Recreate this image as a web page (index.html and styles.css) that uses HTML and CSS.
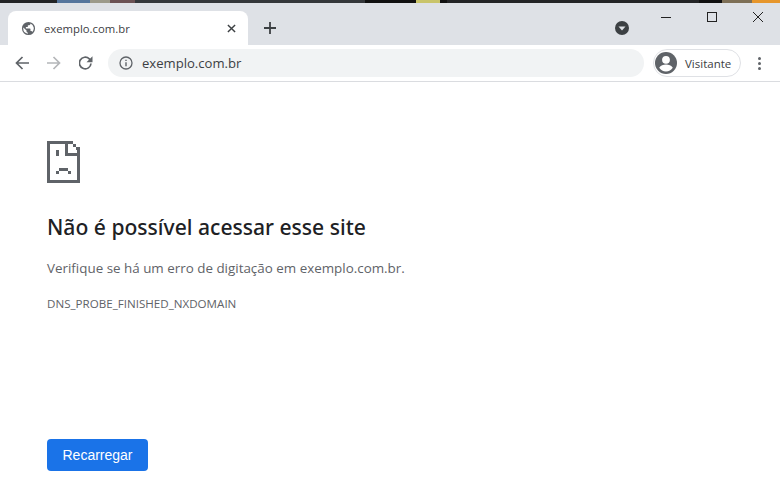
FILE: index.html
```html
<!DOCTYPE html>
<html lang="pt-BR">
<head>
    <meta charset="UTF-8">
    <title>exemplo.com.br</title>
    <link rel="stylesheet" href="styles.css">
</head>
<body>
    <!-- Desktop wallpaper strip above the window -->
    <div class="desktop">
        <span class="wall wall-blue"></span>
        <span class="wall wall-beige"></span>
        <span class="wall wall-brown"></span>
        <span class="wall wall-grey"></span>
        <span class="wall wall-black"></span>
        <span class="wall wall-yellow"></span>
        <span class="wall wall-black-short"></span>
        <span class="wall wall-grey-long"></span>
        <span class="wall wall-black-mid"></span>
        <span class="wall wall-olive"></span>
        <span class="wall wall-orange"></span>
    </div>

    <!-- Tab strip -->
    <div class="tabstrip">
        <div class="tab">
            <svg class="favicon" viewBox="0 0 16 16"><path fill="#5f6368" d="M8 1a7 7 0 1 0 0 14A7 7 0 0 0 8 1zM7.300 13.500A5.600 5.600 0 0 1 2.400 8c0-.4 0-.8.1-1.200L5.900 10.200v.7c0 .8.600 1.400 1.400 1.400v1.200zm4.800-1.800c-.2-.6-.7-1-1.300-1h-.7V8.600c0-.4-.3-.7-.7-.7H5.200V6.500h1.400c.4 0 .7-.3.7-.7V4.400h1.400c.8 0 1.400-.6 1.400-1.400v-.3a5.600 5.600 0 0 1 2 9z"/></svg>
            <span class="tab-title">exemplo.com.br</span>
            <svg class="tab-close" viewBox="0 0 10 10"><path d="M1 1l8 8M9 1l-8 8"/></svg>
        </div>
        <svg class="new-tab" viewBox="0 0 12 12"><path d="M6 0v12M0 6h12"/></svg>
        <div class="strip-space"></div>
        <svg class="tab-search" viewBox="0 0 14 14"><circle cx="7" cy="7" r="7" fill="#3c4043"/><path fill="#dee1e6" d="M3.500 5.500h7L7 9.500z"/></svg>
        <div class="window-controls">
            <svg viewBox="0 0 46 30"><path d="M19 15.500h10"/></svg>
            <svg viewBox="0 0 46 30"><rect x="19.500" y="10.500" width="9" height="9"/></svg>
            <svg viewBox="0 0 46 30"><path d="M19 10l10 10M29 10l-10 10"/></svg>
        </div>
    </div>

    <!-- Address bar row -->
    <div class="toolbar">
        <svg class="nav-icon" viewBox="0 0 14 14"><path class="nav-dark" d="M14 7H1.500M7.500 1L1.500 7l6 6"/></svg>
        <svg class="nav-icon" viewBox="0 0 14 14"><path class="nav-light" d="M0 7h12.500M6.500 1l6 6-6 6"/></svg>
        <svg class="nav-icon" viewBox="1.500 1 14 14"><path class="nav-dark" d="M13.500 8.500a5.800 5.800 0 1 1-1.700-4.600L14 6.200"/><path fill="#5f6368" d="M15 1.200v6h-6z"/></svg>
        <div class="omnibox">
            <svg class="info-icon" viewBox="0 0 14 14"><circle cx="7" cy="7" r="6" fill="none" stroke="#5f6368" stroke-width="1.300"/><path fill="#5f6368" d="M6.300 6.200h1.400v4.100H6.300zM6.300 3.700h1.400v1.400H6.300z"/></svg>
            <span class="url">exemplo.com.br</span>
        </div>
        <div class="profile">
            <svg class="avatar" viewBox="0 0 22 22"><circle cx="11" cy="11" r="11" fill="#5f6368"/><circle cx="11" cy="7.800" r="3.900" fill="#fff"/><path fill="#fff" d="M4.200 15.800c1.300-2.300 4.200-3.300 6.800-3.300s5.500 1 6.800 3.300c-1.500 2.200-4 3.700-6.800 3.700s-5.300-1.500-6.800-3.700z"/></svg>
            <span class="profile-name">Visitante</span>
        </div>
        <div class="menu-dots"><i></i><i></i><i></i></div>
    </div>

    <!-- Error page -->
    <main class="error-page">
        <svg class="sad-file" viewBox="0 0 33 42" shape-rendering="crispEdges">
            <path fill="#5f6368" d="M0 0h26v3H3v36h27V15H18V3h3v9h12v30H0zM26 3h3v3h-3zM29 6h4v3h-4zM30 9h3v3h-3z"/>
            <path fill="#5f6368" d="M9 9h3v6H9zM9 30h3v3H9zM12 27h9v3h-9zM21 30h3v3h-3z"/>
        </svg>
        <h1>Não é possível acessar esse site</h1>
        <p class="message">Verifique se há um erro de digitação em exemplo.com.br.</p>
        <p class="error-code">DNS_PROBE_FINISHED_NXDOMAIN</p>
        <button class="reload">Recarregar</button>
    </main>
</body>
</html>
```

FILE: styles.css
```css
* {
    box-sizing: border-box;
}
html, body {
    margin: 0;
    height: 100%;
}
body {
    width: 780px;
    height: 493px;
    overflow: hidden;
    display: flex;
    flex-direction: column;
    background-color: #fff;
    font-family: "Open Sans", "Noto Sans", sans-serif;
}
svg {
    display: block;
    flex: none;
}

/* wallpaper */
.desktop {
    height: 3px;
    display: flex;
    background-color: #232426;
}
.wall {
    height: 100%;
}
.wall-blue {
    width: 33px;
    margin-left: 57px;
    background-color: #55759c;
}
.wall-beige {
    width: 20px;
    background-color: #9c9a8a;
}
.wall-brown {
    width: 25px;
    background-color: #6b5153;
}
.wall-grey {
    width: 230px;
    background-color: #34373a;
}
.wall-black {
    width: 51px;
    background-color: #111;
}
.wall-yellow {
    width: 24px;
    background-color: #c9c46a;
}
.wall-black-short {
    width: 7px;
    background-color: #111;
}
.wall-grey-long {
    width: 252px;
    background-color: #232426;
}
.wall-black-mid {
    width: 23px;
    background-color: #111;
}
.wall-olive {
    width: 30px;
    background-color: #7d6f56;
}
.wall-orange {
    flex: 1;
    background-color: #e6962c;
}

/* tab strip */
.tabstrip {
    height: 42px;
    display: flex;
    align-items: flex-end;
    background-color: #dee1e6;
}
.tab {
    width: 240px;
    height: 34px;
    margin-left: 8px;
    padding: 0 12px 0 13px;
    display: flex;
    align-items: center;
    background-color: #fff;
    border-radius: 8px 8px 0 0;
}
.favicon {
    width: 15px;
    height: 15px;
}
.tab-title {
    flex: 1;
    margin-left: 8px;
    font-size: 11.300px;
    color: #3c4043;
}
.tab-close {
    width: 9px;
    height: 9px;
    fill: none;
    stroke: #3c4043;
    stroke-width: 1.600;
}
.new-tab {
    width: 12px;
    height: 12px;
    margin: 0 0 11px 16px;
    fill: none;
    stroke: #3c4043;
    stroke-width: 1.800;
}
.strip-space {
    flex: 1;
}
.tab-search {
    width: 14px;
    height: 14px;
    margin-bottom: 10px;
}
.window-controls {
    display: flex;
    align-self: flex-start;
    margin: -1px 0 0 13px;
}
.window-controls svg {
    width: 46px;
    height: 30px;
    fill: none;
    stroke: #222;
    stroke-width: 1;
}

/* toolbar */
.toolbar {
    height: 37px;
    padding: 0 0 0 15px;
    display: flex;
    align-items: center;
    background-color: #fff;
    border-bottom: 1px solid #dadce0;
}
.nav-icon {
    width: 14px;
    height: 14px;
    margin-right: 18px;
}
.nav-dark {
    fill: none;
    stroke: #5f6368;
    stroke-width: 1.700;
}
.nav-light {
    fill: none;
    stroke: #b4b6b9;
    stroke-width: 1.700;
}
.omnibox {
    width: 536px;
    height: 28px;
    margin-left: -3px;
    padding-left: 11px;
    display: flex;
    align-items: center;
    background-color: #f1f3f4;
    border-radius: 14px;
}
.info-icon {
    width: 14px;
    height: 14px;
}
.url {
    margin-left: 9px;
    font-size: 13.100px;
    color: #3c4043;
}
.profile {
    width: 88px;
    height: 28px;
    margin-left: 9px;
    padding-left: 1px;
    display: flex;
    align-items: center;
    border: 1px solid #dfe1e5;
    border-radius: 14px;
}
.avatar {
    width: 22px;
    height: 22px;
}
.profile-name {
    margin-left: 8px;
    font-size: 11.500px;
    color: #3c4043;
}
.menu-dots {
    margin-left: 17px;
    display: flex;
    flex-direction: column;
    gap: 2px;
}
.menu-dots i {
    display: block;
    width: 3px;
    height: 3px;
    border-radius: 50%;
    background-color: #5f6368;
}

/* error page */
.error-page {
    flex: 1;
    padding: 59px 0 0 47px;
    display: flex;
    flex-direction: column;
    align-items: flex-start;
    background-color: #fff;
}
.sad-file {
    width: 33px;
    height: 42px;
}
h1 {
    margin: 29px 0 0;
    font-family: "Noto Sans", "Open Sans", sans-serif;
    font-size: 21.100px;
    line-height: 30px;
    font-weight: 500;
    color: #202124;
}
.message {
    margin: 16px 0 0;
    font-size: 13.400px;
    line-height: 20px;
    color: #5f6368;
}
.error-code {
    margin: 18px 0 0;
    font-size: 11.600px;
    line-height: 16px;
    color: #5f6368;
}
.reload {
    margin-top: 127px;
    width: 101px;
    height: 32px;
    padding: 0;
    border: none;
    border-radius: 4px;
    background-color: #1a73e8;
    color: #fff;
    font-family: "Liberation Sans", Arial, sans-serif;
    font-size: 14px;
}
```
